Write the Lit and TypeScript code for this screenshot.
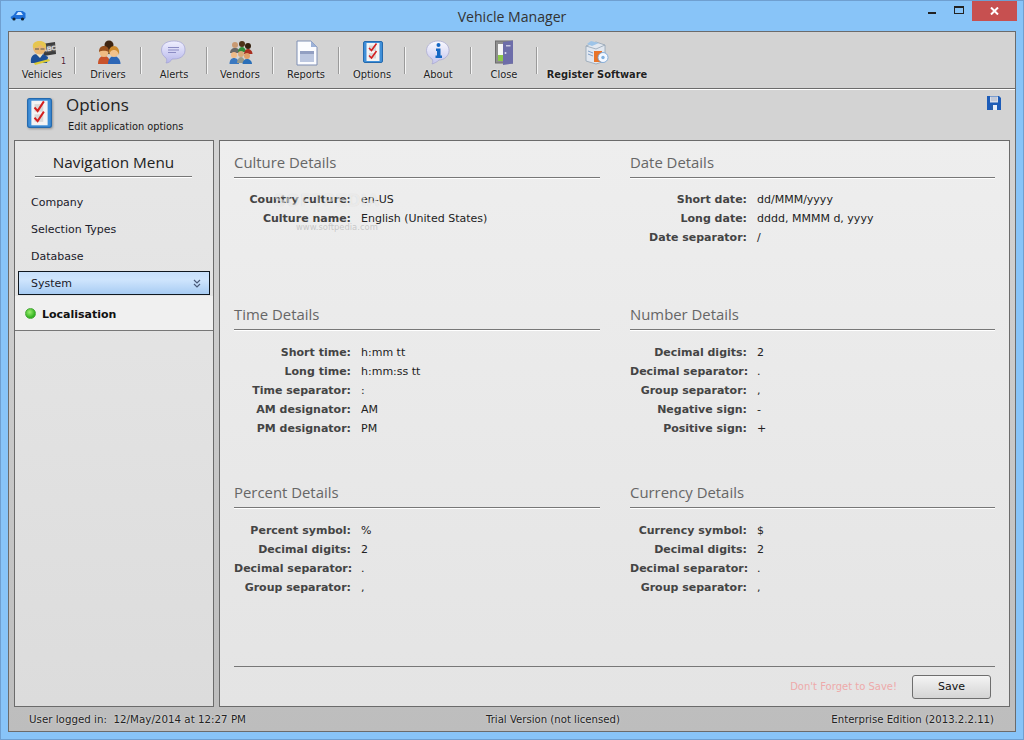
import { LitElement, html, css, svg } from 'lit';
import { customElement } from 'lit/decorators.js';

const ICONS: Record<string, unknown> = {
  vehicles: svg`
    <path d="M14 6l13-2 1 12-12 2z" fill="#3c3c3c"/>
    <text x="21.500" y="13" font-size="6.500" font-weight="700" text-anchor="middle" fill="#e4e4e4" font-family="Liberation Sans" transform="rotate(-8 21 13)">ABC</text>
    <path d="M3 25c-1-6 2-9 6-9h6l5 3-1 6z" fill="#1d4f96"/>
    <path d="M8 16l4 4 3-4z" fill="#efe6c8"/>
    <circle cx="11.500" cy="10" r="6.500" fill="#eab772"/>
    <path d="M5 10c-1-5 2-7 6.500-7s7.500 2 6.500 7c-3-1-4-2-5.500-3.500-2 2-4 3.500-7.500 3.500z" fill="#e6c650"/>
    <path d="M7 11h4M12.500 11h4" stroke="#555" stroke-width="1"/>
    <path d="M6 25l15-4 1 2-15 4z" fill="#dccb34"/>`,
  drivers: svg`
    <circle cx="15" cy="7" r="4.500" fill="#3e2410"/>
    <path d="M9 16c0-3 3-5 6-5s6 2 6 5z" fill="#2b2b2b"/>
    <path d="M4 26c0-5 2-8 6-8s6 3 6 8z" fill="#c9522a"/>
    <circle cx="10" cy="14.500" r="4.500" fill="#f0bb82"/>
    <path d="M5 14c0-4 2-6 5-6s5 2 5 6c-3-1-6-2-10 0z" fill="#97501e"/>
    <path d="M14 26c0-5 3-8 6-8s6.500 3 6.500 8z" fill="#2c66b6"/>
    <circle cx="20" cy="14.500" r="4.500" fill="#f2c28c"/>
    <path d="M15 17c-1-6 2-9 5-9s6 3 5 9c-1-4-3-5-5-5s-4 1-5 5z" fill="#cc8a2e"/>`,
  alerts: svg`
    <defs><linearGradient id="ag" x1="0" y1="0" x2="0" y2="1"><stop offset="0" stop-color="#f0f0ff"/><stop offset="1" stop-color="#b6b6ea"/></linearGradient></defs>
    <path d="M14 3c7 0 11 3 11 9s-5 9-11 9h-2c-1 2-3 4-6 4 1-2 1-4 0-5-3-2-4.500-5-4.500-8C1.500 6 7 3 14 3z" fill="url(#ag)" stroke="#a2a2d4" stroke-width=".7"/>
    <path d="M8 9.500h11M8 12h11M8 14.500h8" stroke="#8c8cc4" stroke-width="1"/>`,
  vendors: svg`
    <circle cx="9" cy="7" r="3" fill="#c99a73"/><path d="M4 15c0-3 2-5 5-5s5 2 5 5z" fill="#686868"/>
    <circle cx="16" cy="6" r="3" fill="#4e3218"/><path d="M12 14c0-3 2-5 4-5s4 2 4 5z" fill="#2f8f3a"/>
    <circle cx="22" cy="8" r="3" fill="#33200e"/><path d="M18 16c0-3 2-5 4-5s4.500 2 4.500 5z" fill="#a82f20"/>
    <circle cx="8" cy="17" r="3" fill="#eebb88"/><path d="M3.500 26c0-4 2-6 4.500-6s5 2 5 6z" fill="#3a78c0"/>
    <circle cx="15" cy="16" r="3" fill="#d8aa7a"/><path d="M11 25c0-3 2-6 4-6s4 3 4 6z" fill="#9a9a88"/>
    <circle cx="21" cy="18" r="3" fill="#e0a06a"/><path d="M16.500 26c0-3 2-5 4.500-5s5 2 5 5z" fill="#2a6fb8"/>`,
  reports: svg`
    <path d="M5 3h14l6 6v18H5z" fill="#fbfcff" stroke="#7f8fb4"/>
    <path d="M19 3v6h6z" fill="#9db2d8"/>
    <rect x="8" y="13" width="14" height="11" fill="#bcc7e0"/>
    <rect x="8" y="13" width="14" height="3" fill="#929fc2"/>`,
  options: svg`
    <rect x="5.500" y="3.500" width="19" height="21" rx="1.500" fill="#3f8fd8" stroke="#256aae"/>
    <rect x="8.500" y="5" width="13" height="18" fill="#f4f4f4"/>
    <rect x="11" y="7.500" width="7" height="5.500" fill="#d8d8d8"/><rect x="11" y="15" width="7" height="5.500" fill="#d8d8d8"/>
    <path d="M11 10l2.500 2.500 5-7M11 17.500l2.500 2.500 5-7" fill="none" stroke="#d42020" stroke-width="1.600"/>`,
  about: svg`
    <defs><linearGradient id="bg" x1="0" y1="0" x2="0" y2="1"><stop offset="0" stop-color="#fafaff"/><stop offset="1" stop-color="#c4c4ec"/></linearGradient></defs>
    <path d="M14 3c6.500 0 11 4 11 9.500S20 22 15 22c-2 2-4 3-7 4 1-2 1-4 0-5-3-2-5.500-4.500-5.500-8.500C2.500 7 7.500 3 14 3z" fill="url(#bg)" stroke="#a6a6d0" stroke-width=".7"/>
    <circle cx="14.500" cy="7" r="2" fill="#1668c4"/>
    <path d="M12 10.500h4.500v7H18V20h-6.500v-2.500H13V13h-1z" fill="#1668c4"/>`,
  close: svg`
    <rect x="5.500" y="3" width="17" height="22" fill="#8e8e8e" stroke="#6c6c6c"/>
    <rect x="8" y="6" width="5" height="11" fill="#f6f6f6"/>
    <rect x="8" y="17" width="5" height="6" fill="#8cc84a"/>
    <path d="M13 4l10-1.500v23L13 27z" fill="#6d6da9"/>
    <rect x="16" y="7" width="4.500" height="1.500" fill="#c8c8e0"/>
    <circle cx="15.500" cy="15" r="1" fill="#dcdcf0"/>`,
  register: svg`
    <path d="M3 8l10-4 9 3v16l-9 3-10-3z" fill="#e2e8f0" stroke="#93a3b4" stroke-width=".8"/>
    <path d="M3 8l10 3 9-4" fill="none" stroke="#93a3b4" stroke-width=".8"/>
    <path d="M8 3l8 2-7 3-5-2z" fill="#9dc4e8"/>
    <path d="M5 13l5 2M5 16l5 2" stroke="#7f9fc8" stroke-width="1"/>
    <rect x="11" y="13" width="8" height="11" fill="#e8742a"/>
    <circle cx="20" cy="19.500" r="5" fill="#f4f8ff" stroke="#6fa0d4" stroke-width=".8"/>
    <circle cx="20" cy="19.500" r="1.700" fill="#7fb0e0"/>`,
};

const TOOLS = [
  ['vehicles', 'Vehicles'],
  ['drivers', 'Drivers'],
  ['alerts', 'Alerts'],
  ['vendors', 'Vendors'],
  ['reports', 'Reports'],
  ['options', 'Options'],
  ['about', 'About'],
  ['close', 'Close'],
];

const SECTIONS: { title: string; rows: string[][] }[] = [
  { title: 'Culture Details', rows: [['Country culture:', 'en-US'], ['Culture name:', 'English (United States)']] },
  { title: 'Date Details', rows: [['Short date:', 'dd/MMM/yyyy'], ['Long date:', 'dddd, MMMM d, yyyy'], ['Date separator:', '/']] },
  { title: 'Time Details', rows: [['Short time:', 'h:mm tt'], ['Long time:', 'h:mm:ss tt'], ['Time separator:', ':'], ['AM designator:', 'AM'], ['PM designator:', 'PM']] },
  { title: 'Number Details', rows: [['Decimal digits:', '2'], ['Decimal separator:', '.'], ['Group separator:', ','], ['Negative sign:', '-'], ['Positive sign:', '+']] },
  { title: 'Percent Details', rows: [['Percent symbol:', '%'], ['Decimal digits:', '2'], ['Decimal separator:', '.'], ['Group separator:', ',']] },
  { title: 'Currency Details', rows: [['Currency symbol:', '$'], ['Decimal digits:', '2'], ['Decimal separator:', '.'], ['Group separator:', ',']] },
];

@customElement('app-root')
export class AppRoot extends LitElement {
  static styles = css`
    :host {
      display: block;
      width: 1024px;
      height: 740px;
      font-family: 'DejaVu Sans', sans-serif;
      font-size: 11px;
      color: #1a1a1a;
    }
    .window {
      position: relative;
      box-sizing: border-box;
      width: 1024px;
      height: 740px;
      background: #88c4f8;
      border: 1px solid #6f9fd0;
      display: flex;
      flex-direction: column;
      padding: 0 7px 7px 7px;
    }
    .titlebar {
      height: 30px;
      flex: none;
      display: flex;
      align-items: center;
      justify-content: center;
      position: relative;
      font-family: 'Open Sans', sans-serif;
      font-size: 14.100px;
      color: #333;
    }
    .carlogo { position: absolute; left: 2px; top: 9px; }
    .winbtns { position: absolute; right: -1px; top: 0; display: flex; align-items: flex-start; }
    .winbtn { width: 27px; height: 20px; display: flex; align-items: center; justify-content: center; }
    .winbtn.x { width: 45px; background: #c75050; }
    .min { width: 8px; height: 2px; background: #222; margin-top: 3px; }
    .max { box-sizing: border-box; width: 10px; height: 8px; border: 1px solid #222; border-top-width: 2px; margin-top: -2px; }
    .inner {
      flex: 1;
      min-height: 0;
      background: linear-gradient(#d3d3d3 0%, #d3d3d3 18%, #bdbdbd 100%);
      border: 1px solid #6b6b6b;
      display: flex;
      flex-direction: column;
    }
    .toolbar {
      flex: none;
      height: 57px;
      box-sizing: border-box;
      border-bottom: 1px solid #6b6b6b;
      display: flex;
      box-shadow: 0 1px 0 #fff;
      background: #d3d3d3;
    }
    .tool {
      width: 66px;
      height: 56px;
      box-sizing: border-box;
      display: flex;
      flex-direction: column;
      align-items: center;
      position: relative;
      padding-top: 6px;
      font-size: 9.900px;
      line-height: 16px;
      color: #222;
      text-shadow: 0 0 2px rgba(255, 255, 255, 0.8);
    }
    .tool svg { width: 29px; height: 29px; }
    .tool.sep::after {
      content: '';
      position: absolute;
      right: -1px;
      top: 15px;
      width: 1px;
      height: 27px;
      background: #9a9a9a;
      border-right: 1px solid #f4f4f4;
    }
    .tool.reg { width: 120px; font-weight: 700; }
    .count { position: absolute; left: 52px; top: 25px; font-size: 8px; line-height: 10px; color: #4a2030; }
    .head {
      flex: none;
      height: 51px;
      box-sizing: border-box;
      display: flex;
      position: relative;
      padding-left: 18px;
    }
    .head svg.opt { width: 25px; height: 30px; margin-top: 9px; filter: drop-shadow(1px 1px 1px rgba(0, 0, 0, 0.3)); }
    .head-text { margin-left: 14px; }
    .head-title { font-family: 'Open Sans', sans-serif; font-size: 17px; line-height: 22px; margin-top: 5px; color: #222; }
    .head-sub { font-size: 9.800px; line-height: 14px; margin-top: 4px; margin-left: 2px; }
    .save-ico { position: absolute; right: 14px; top: 7px; }
    .body {
      flex: none;
      height: 567px;
      display: flex;
      gap: 5px;
      padding: 0 5px;
    }
    .nav {
      width: 200px;
      flex: none;
      box-sizing: border-box;
      border: 1px solid #6b6b6b;
      background: linear-gradient(#e7e7e7, #dcdcdc);
      display: flex;
      flex-direction: column;
    }
    .nav-title {
      margin: 0 21px 0 20px;
      height: 36px;
      box-sizing: border-box;
      border-bottom: 1px solid #777;
      box-shadow: 0 1px 0 #fff;
      text-align: center;
      font-family: 'Open Sans', sans-serif;
      font-size: 15.300px;
      line-height: 43px;
      color: #222;
      white-space: nowrap;
    }
    .nav-items { padding: 12px 3px 0 3px; display: flex; flex-direction: column; }
    .nav-item { height: 27px; line-height: 27px; padding-left: 13px; color: #1a1a2a; box-sizing: border-box; }
    .nav-item.active {
      height: 24px;
      line-height: 23px;
      margin-top: 1px;
      border: 1px solid #101820;
      padding-left: 12px;
      background: linear-gradient(#c8e0fb 0%, #cfe5fd 35%, #a8ccf3 100%);
      display: flex;
      justify-content: space-between;
      align-items: center;
    }
    .chev { margin-right: 8px; }
    .nav-sub {
      margin-top: 1px;
      height: 35px;
      box-sizing: border-box;
      background: #f0f0f0;
      border-bottom: 1px solid #777;
      display: flex;
      align-items: center;
      gap: 6px;
      padding: 2px 0 0 10px;
      font-weight: 700;
      color: #111;
    }
    .led { width: 9px; height: 9px; margin-top: -2px; border-radius: 50%; background: radial-gradient(circle at 40% 35%, #9cf070, #2fb01e 70%); border: 1px solid #4aa83a; }
    .panel {
      flex: 1;
      box-sizing: border-box;
      border: 1px solid #6b6b6b;
      background: linear-gradient(#eeeeee, #e4e4e4);
      padding: 0 14px;
      display: flex;
      flex-direction: column;
      position: relative;
    }
    .grid {
      display: grid;
      grid-template-columns: 366px 365px;
      column-gap: 30px;
      grid-template-rows: 152px 178px 1fr;
      flex: 1;
      min-height: 0;
      padding-top: 12px;
    }
    .sec-title {
      font-family: 'Open Sans', sans-serif;
      font-size: 14.900px;
      color: #666;
      height: 25px;
      line-height: 18px;
      box-sizing: border-box;
      border-bottom: 1px solid #777;
      box-shadow: 0 1px 0 #fff;
    }
    .rows { margin-top: 12px; display: grid; grid-template-columns: 117px 1fr; column-gap: 10px; grid-auto-rows: 19px; line-height: 19px; }
    .sec:nth-child(n + 3) .rows { margin-top: 13px; }
    .lbl { text-align: right; font-weight: 700; color: #444; white-space: nowrap; }
    .val { color: #222; white-space: nowrap; }
    .foot {
      flex: none;
      height: 40px;
      border-top: 1px solid #777;
      display: flex;
      align-items: center;
      justify-content: flex-end;
      box-sizing: border-box;
      padding: 0 4px 0 0;
      gap: 15px;
    }
    .remind { color: #eeaaaa; font-size: 10px; }
    .btn {
      width: 79px;
      height: 24px;
      box-sizing: border-box;
      border: 1px solid #6e6e6e;
      border-radius: 3px;
      background: linear-gradient(#f4f4f4, #d4d4d4);
      text-align: center;
      line-height: 22px;
      color: #111;
    }
    .status {
      flex: 1;
      display: flex;
      align-items: center;
      padding: 0 21px 0 20px;
      font-size: 10.150px;
      color: #222;
      white-space: nowrap;
      text-shadow: 0 0 2px rgba(255, 255, 255, 0.7);
    }
    .status .user { width: 457px; font-size: 10.300px; }
    .status .edition { margin-left: auto; }
    .mark { position: absolute; left: 54px; top: 51px; color: rgba(255, 255, 255, 0.55); pointer-events: none; line-height: 1; white-space: nowrap; text-shadow: 0 0 1px rgba(0, 0, 0, 0.12); }
    .mark b { display: block; font-family: 'Liberation Sans', sans-serif; font-size: 17px; letter-spacing: 1px; font-weight: 700; }
    .mark span { display: block; font-size: 8.400px; margin: 14px 0 0 22px; color: rgba(150, 150, 150, 0.45); text-shadow: none; }
  `;

  render() {
    return html`
      <div class="window">
        <div class="titlebar">
          <svg class="carlogo" width="16" height="11" viewBox="0 0 16 11">
            <path d="M0.500 7l3-2 3-4h6l3 2v5l-1 1H1.500z" fill="#1e6fd8"/>
            <path d="M6 5l2-3h3l2 3z" fill="#cfe6ff"/>
            <circle cx="4" cy="9" r="1.600" fill="#123"/><circle cx="12.500" cy="9" r="1.600" fill="#123"/>
          </svg>
          Vehicle Manager
          <div class="winbtns">
            <div class="winbtn"><div class="min"></div></div>
            <div class="winbtn"><div class="max"></div></div>
            <div class="winbtn x">
              <svg width="9" height="8" viewBox="0 0 9 8"><path d="M1 0.500l7 7M8 0.500l-7 7" stroke="#fff" stroke-width="2"/></svg>
            </div>
          </div>
        </div>
        <div class="inner">
          <div class="toolbar">
            ${TOOLS.map(([ico, name]) => html`
              <div class="tool sep">
                <svg viewBox="0 0 29 29">${ICONS[ico]}</svg>
                ${name}
                ${ico === 'vehicles' ? html`<span class="count">1</span>` : ''}
              </div>`)}
            <div class="tool reg"><svg viewBox="0 0 29 29">${ICONS.register}</svg>Register Software</div>
          </div>
          <div class="head">
            <svg class="opt" viewBox="5 3 20 22" preserveAspectRatio="none">${ICONS.options}</svg>
            <div class="head-text">
              <div class="head-title">Options</div>
              <div class="head-sub">Edit application options</div>
            </div>
            <svg class="save-ico" width="14" height="14" viewBox="0 0 14 14">
              <path d="M0 0h12l2 2v12H0z" fill="#1d5cb8"/>
              <rect x="3" y="0.500" width="8" height="6" fill="#d8dde8"/>
              <path d="M4 2h6M4 4h6" stroke="#aab4c8" stroke-width="1"/>
              <rect x="4" y="9" width="6" height="5" fill="#e8eef8"/>
              <rect x="4" y="9" width="2" height="5" fill="#2a5fa8"/>
            </svg>
          </div>
          <div class="body">
            <div class="nav">
              <div class="nav-title">Navigation Menu</div>
              <div class="nav-items">
                <div class="nav-item">Company</div>
                <div class="nav-item">Selection Types</div>
                <div class="nav-item">Database</div>
                <div class="nav-item active">System
                  <svg class="chev" width="8" height="9" viewBox="0 0 8 9"><path d="M1 1l3 3 3-3M1 5l3 3 3-3" fill="none" stroke="#4a5a78" stroke-width="1.200"/></svg>
                </div>
              </div>
              <div class="nav-sub"><span class="led"></span>Localisation</div>
            </div>
            <div class="panel">
              <div class="grid">
                ${SECTIONS.map(s => html`
                  <div class="sec">
                    <div class="sec-title">${s.title}</div>
                    <div class="rows">
                      ${s.rows.map(r => html`<div class="lbl">${r[0]}</div><div class="val">${r[1]}</div>`)}
                    </div>
                  </div>`)}
              </div>
              <div class="foot">
                <span class="remind">Don't Forget to Save!</span>
                <div class="btn">Save</div>
              </div>
              <div class="mark"><b>SOFTPEDIA</b><span>www.softpedia.com</span></div>
            </div>
          </div>
          <div class="status">
            <div class="user">User logged in:&nbsp; 12/May/2014 at 12:27 PM</div>
            <div>Trial Version (not licensed)</div>
            <div class="edition">Enterprise Edition (2013.2.2.11)</div>
          </div>
        </div>
      </div>
    `;
  }
}
